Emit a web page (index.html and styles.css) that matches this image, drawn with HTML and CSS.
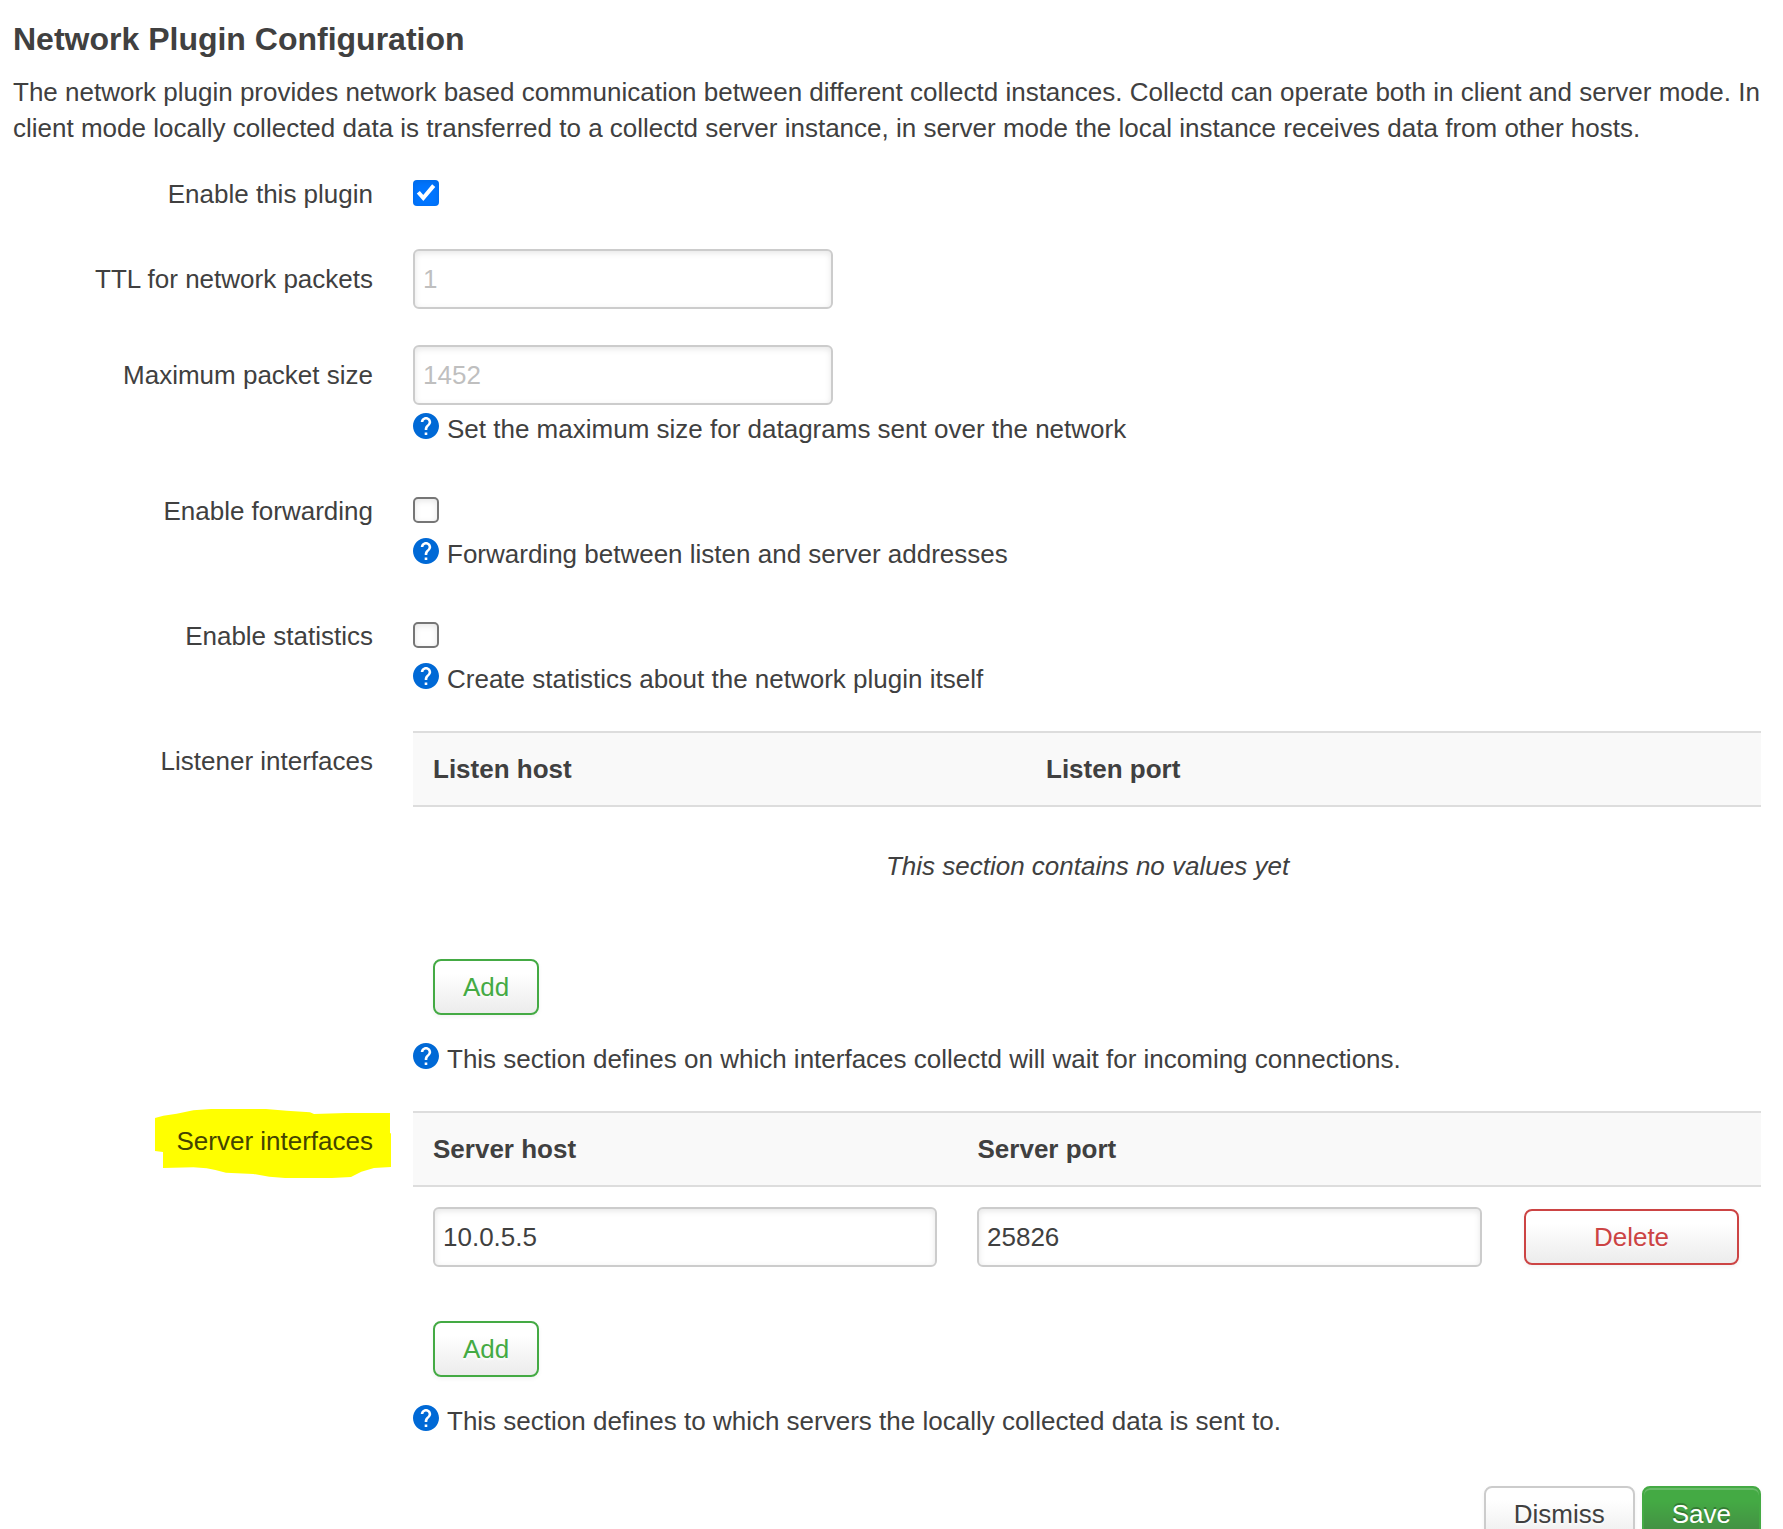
FILE: index.html
```html
<!DOCTYPE html>
<html lang="en">
<head>
<meta charset="utf-8">
<title>Network Plugin Configuration</title>
<link rel="stylesheet" href="styles.css">
</head>
<body>
<svg width="0" height="0" class="defs">
  <symbol id="help" viewBox="2 2 20 20">
    <circle cx="12" cy="12" r="9.5" fill="#fff"/>
    <path fill="#0069d6" d="M12 2C6.48 2 2 6.48 2 12s4.48 10 10 10 10-4.48 10-10S17.52 2 12 2zm1 17h-2v-2h2v2zm2.07-7.75l-.9.92C13.45 12.9 13 13.5 13 15h-2v-.5c0-1.1.45-2.1 1.17-2.83l1.24-1.26c.37-.36.59-.86.59-1.41 0-1.1-.9-2-2-2s-2 .9-2 2H8c0-2.21 1.79-4 4-4s4 1.79 4 4c0 .88-.36 1.68-.93 2.25z"/>
  </symbol>
</svg>
<main class="page">
  <h1 class="title">Network Plugin Configuration</h1>
  <p class="descr">The network plugin provides network based communication between different collectd instances. Collectd can operate both in client and server mode. In client mode locally collected data is transferred to a collectd server instance, in server mode the local instance receives data from other hosts.</p>

  <div class="row row-first">
    <label class="label">Enable this plugin</label>
    <div class="field">
      <span class="check checked"><svg viewBox="0 0 26 26"><path d="M5.3 12.2L10.3 18L20.7 5.6" fill="none" stroke="#fff" stroke-width="4"/></svg></span>
    </div>
  </div>
  <div class="row row-ttl">
    <label class="label label-low">TTL for network packets</label>
    <div class="field"><input class="input" type="text" placeholder="1"></div>
  </div>
  <div class="row row-size">
    <label class="label label-low">Maximum packet size</label>
    <div class="field">
      <input class="input" type="text" placeholder="1452">
      <div class="help help-input"><svg class="icon"><use href="#help"/></svg>Set the maximum size for datagrams sent over the network</div>
    </div>
  </div>
  <div class="row row-check">
    <label class="label">Enable forwarding</label>
    <div class="field">
      <span class="check"></span>
      <div class="help help-check"><svg class="icon"><use href="#help"/></svg>Forwarding between listen and server addresses</div>
    </div>
  </div>
  <div class="row row-check">
    <label class="label">Enable statistics</label>
    <div class="field">
      <span class="check"></span>
      <div class="help help-check"><svg class="icon"><use href="#help"/></svg>Create statistics about the network plugin itself</div>
    </div>
  </div>
  <div class="row row-table">
    <label class="label label-low">Listener interfaces</label>
    <div class="field">
      <div class="thead cols-listen"><span>Listen host</span><span>Listen port</span></div>
      <div class="empty">This section contains no values yet</div>
      <div class="create"><button class="btn positive">Add</button></div>
      <div class="help help-table"><svg class="icon"><use href="#help"/></svg>This section defines on which interfaces collectd will wait for incoming connections.</div>
    </div>
  </div>
  <div class="row row-table">
    <label class="label label-low marked">
      <svg class="marker" viewBox="0 0 800 300"><path d="M75 84L100 77L140 71L190 61L243 57H408L470 62L540 67L552 72L648 69H780V130H783V231L732 234L694 245L663 261L606 264H465L418 260L370 252L288 248L256 240L230 235L190 232L99 234V186L75 183Z" fill="#ff0"/></svg>
      <span>Server interfaces</span>
    </label>
    <div class="field">
      <div class="thead cols-server"><span>Server host</span><span>Server port</span></div>
      <div class="trow">
        <input class="input" type="text" value="10.0.5.5">
        <input class="input" type="text" value="25826">
        <button class="btn negative">Delete</button>
      </div>
      <div class="create create-server"><button class="btn positive">Add</button></div>
      <div class="help help-table"><svg class="icon"><use href="#help"/></svg>This section defines to which servers the locally collected data is sent to.</div>
    </div>
  </div>
  <div class="actions">
    <button class="btn">Dismiss</button>
    <button class="btn save">Save</button>
  </div>
</main>
</body>
</html>
```
FILE: styles.css
```css
* { box-sizing: border-box; }
html, body { height: 100%; }
body {
  margin: 0;
  overflow: hidden;
  background: #fff;
  color: #404040;
  font: 26px/36px "Liberation Sans", Arial, sans-serif;
}
.defs { position: absolute; }
.page { padding: 19px 22px 0 13px; }
.title { margin: 0 0 15px; font-size: 32px; line-height: 40px; font-weight: bold; }
.descr { margin: 0 -10px 0 0; }

.row { display: grid; grid-template-columns: 360px 1fr; column-gap: 40px; }
.row-first { margin-top: 30px; }
.row-ttl { margin-top: 37px; }
.row-size { margin-top: 36px; }
.row-check { margin-top: 46px; }
.row-table { margin-top: 34px; }
.label { text-align: right; }
.label-low { padding-top: 12px; }
.marked { position: relative; color: #440; }
.marked span { position: relative; }
.marker { position: absolute; left: 117px; top: -21px; width: 266.67px; height: 100px; }
.field { display: flex; flex-direction: column; min-width: 0; }

.input {
  width: 420px;
  height: 60px;
  margin: 0;
  padding: 8px;
  border: 2px solid #ccc;
  border-radius: 6px;
  background: #fff;
  box-shadow: inset 0 2px 6px rgba(0, 0, 0, .1);
  color: #404040;
  font: inherit;
}
.input::placeholder { color: #bfbfbf; opacity: 1; }
.check {
  width: 26px;
  height: 26px;
  margin-top: 4px;
  border: 2px solid #767676;
  border-radius: 5px;
  box-shadow: inset 0 2px 6px rgba(0, 0, 0, .1);
}
.checked { border: 0; border-radius: 4px; background: #0075ff; }
.checked svg { display: block; }

.help { display: flex; gap: 8px; }
.help-input { margin-top: 6px; }
.help-check { margin-top: 13px; }
.help-table { margin-top: 26px; }
.icon { flex: none; width: 26px; height: 26px; margin-top: 2px; }

.thead {
  display: grid;
  padding: 18px 20px;
  border: solid #ddd;
  border-width: 2px 0;
  background: #f9f9f9;
  font-weight: bold;
}
.cols-listen { grid-template-columns: 613px 1fr; }
.cols-server { grid-template-columns: 544.5px 1fr; }
.empty { padding: 41px 0 75px 1px; text-align: center; font-style: italic; }
.trow {
  display: grid;
  grid-template-columns: 504px 505px 217px;
  align-items: center;
  padding: 20px 20px 0;
  column-gap: 40px;
}
.trow .input { width: 100%; }
.trow .btn { margin-left: 2px; }
.create { display: flex; padding-left: 20px; }
.create-server { margin-top: 54px; }

.btn {
  height: 56px;
  padding: 8px 28px;
  border: 2px solid #ccc;
  border-radius: 8px;
  background: linear-gradient(#fff, #fff 25%, #ebebeb) border-box;
  box-shadow: inset 0 2px 0 rgba(255, 255, 255, .2), 0 2px 4px rgba(0, 0, 0, .05);
  color: #404040;
  font: inherit;
  text-shadow: 0 2px 2px rgba(255, 255, 255, .75);
}
.positive { border-color: #4a4; color: #4a4; }
.negative { border-color: #c44; color: #c44; }
.save {
  border-color: #4a4;
  background: linear-gradient(#4a4, #4a4 25%, #484);
  color: #fff;
  text-shadow: 0 -2px 0 rgba(0, 0, 0, .25);
}
.actions { display: flex; justify-content: flex-end; gap: 7px; margin-top: 47px; }
```
